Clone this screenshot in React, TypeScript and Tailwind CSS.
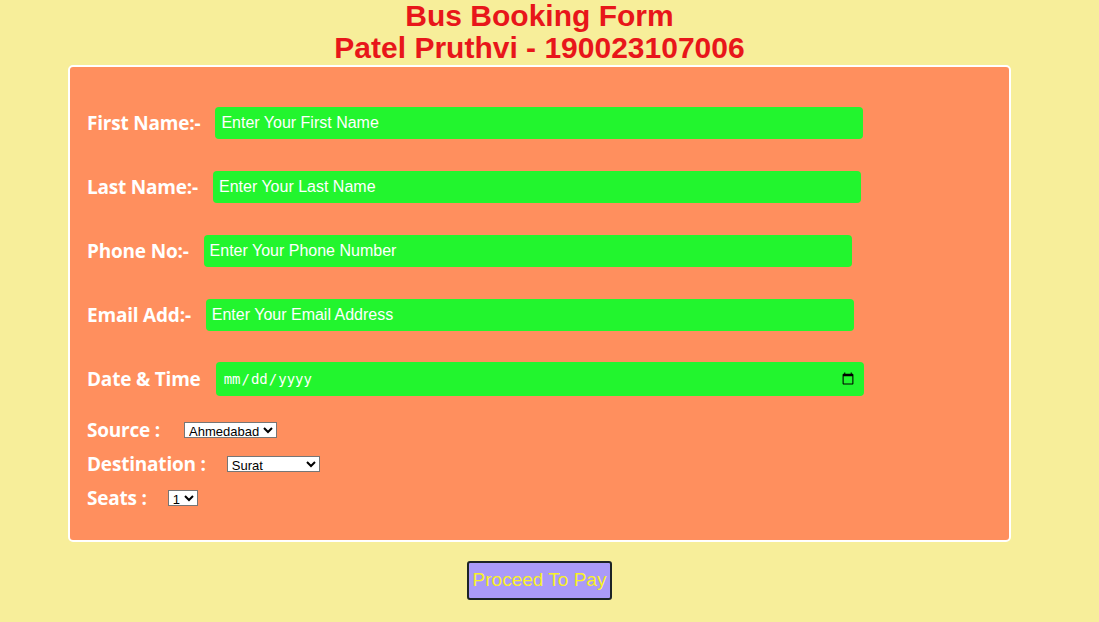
import { useState } from "react";

const labelCls = "text-[19px] font-bold text-white tracking-[-0.2px] whitespace-nowrap font-['Open_Sans','Noto_Sans',sans-serif]";
const inputCls =
  "h-8 w-[648px] rounded-[4px] bg-[#22f52e] px-[6px] font-['Liberation_Sans',Arial,sans-serif] text-[16px] text-white placeholder:text-white outline-none";
const selectCls =
  "h-[16px] border border-[#767676] bg-white font-['Liberation_Sans',Arial,sans-serif] text-[13px] leading-none text-black";

function Row({ label, children }: { label: string; children: React.ReactNode }) {
  return (
    <div className="flex h-16 items-center">
      <span className={labelCls + " mr-[15px]"}>{label}</span>
      {children}
    </div>
  );
}

const cities = ["Ahmedabad", "Surat", "Vadodara", "Rajkot"];

export default function App() {
  const [seats, setSeats] = useState("1");
  return (
    <div className="min-h-[622px] bg-[#f7ee9a] font-['Liberation_Sans',Arial,sans-serif]">
      <div className="w-[1079px]">
        <h1 className="text-center text-[30px] font-bold leading-[32px] text-[#e8161a]">
          Bus Booking Form
          <br />
          Patel Pruthvi - 190023107006
        </h1>
        <div className="mx-[68px] mt-[1px] rounded-[5px] border-2 border-white bg-[#ff8f5e] pb-[25px] pl-[17px] pt-[24px]">
          <Row label="First Name:-">
            <input className={inputCls} placeholder="Enter Your First Name" />
          </Row>
          <Row label="Last Name:-">
            <input className={inputCls} placeholder="Enter Your Last Name" />
          </Row>
          <Row label="Phone No:-">
            <input className={inputCls} placeholder="Enter Your Phone Number" />
          </Row>
          <Row label="Email Add:-">
            <input className={inputCls} placeholder="Enter Your Email Address" />
          </Row>
          <Row label="Date & Time">
            <input
              type="date"
              className="h-[34px] w-[648px] rounded-[4px] bg-[#22f52e] px-[7px] font-['DejaVu_Sans_Mono',monospace] text-[14px] text-white outline-none"
            />
          </Row>
          <div className="mt-[2px] flex h-[34px] items-center">
            <span className={labelCls + " mr-[24px]"}>Source :</span>
            <select className={selectCls} defaultValue="Ahmedabad">
              {cities.map((c) => (
                <option key={c}>{c}</option>
              ))}
            </select>
          </div>
          <div className="flex h-[34px] items-center">
            <span className={labelCls + " mr-[21px]"}>Destination :</span>
            <select className={selectCls} defaultValue="Surat">
              {cities.map((c) => (
                <option key={c}>{c}</option>
              ))}
            </select>
          </div>
          <div className="flex h-[34px] items-center">
            <span className={labelCls + " mr-[21px]"}>Seats :</span>
            <select value={seats} onChange={(e) => setSeats(e.target.value)} className={selectCls}>
              {["1", "2", "3", "4", "5"].map((n) => (
                <option key={n}>{n}</option>
              ))}
            </select>
          </div>
        </div>
        <div className="mt-[19px] flex justify-center">
          <button className="h-[39px] w-[145px] rounded-[3px] border-2 border-[#1c2326] bg-[#aa9af8] text-[19px] text-[#f8f02a]">
            Proceed To Pay
          </button>
        </div>
      </div>
    </div>
  );
}
